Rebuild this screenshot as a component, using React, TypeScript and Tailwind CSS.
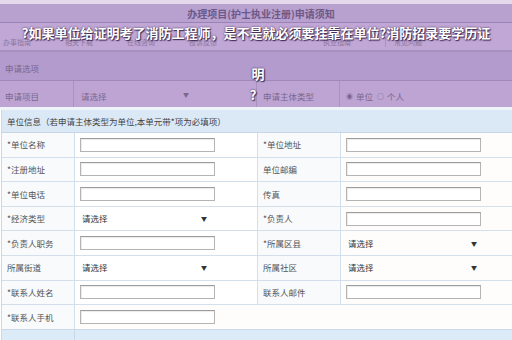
import React from "react";

const F = { fontFamily: '"Noto Sans CJK SC", "Noto Sans", sans-serif' };

function Input() {
  return <div className="ml-[5px] h-[14px] w-[135px] border border-[#b4b4b4] border-t-[#9c9c9c] bg-white shadow-[inset_1px_1px_1px_rgba(0,0,0,0.08)]" />;
}

function Select({ w = 125 }: { w?: number }) {
  return (
    <div className={`ml-[7px] flex items-center justify-between text-[8.5px] text-[#333] ${w === 125 ? "w-[125px]" : "w-[129px]"}`}>
      <span>请选择</span>
      <span className="text-[6px] text-[#333]">▼</span>
    </div>
  );
}

type Cell = "input" | "select";
const rows: [string, Cell, string, Cell][] = [
  ["*单位名称", "input", "*单位地址", "input"],
  ["*注册地址", "input", "单位邮编", "input"],
  ["*单位电话", "input", "传真", "input"],
  ["*经济类型", "select", "*负责人", "input"],
  ["*负责人职务", "input", "*所属区县", "select"],
  ["所属街道", "select", "所属社区", "select"],
  ["*联系人姓名", "input", "联系人邮件", "input"],
];

export default function App() {
  return (
    <div className="relative h-[340px] w-[512px] overflow-hidden bg-white" style={F}>
      {/* top (purple-tinted) area */}
      <div className="flex flex-col">
        <div className="h-[4px] bg-[#e4daec]" />
        <div className="flex h-[18px] items-center justify-center bg-[#b8a0cf] text-[10px] font-bold text-[#6d5987]">
          <span className="ml-[10px]">办理项目(护士执业注册)申请须知</span>
        </div>
        <div className="h-[1px] bg-[#9a83b6]" />
        <div className="flex h-[27px] items-end gap-[34px] bg-[#c0a7d5] pb-[3px] pl-[3px] text-[7px] text-[#8a76a0]">
          <span>办事指南</span>
          <span>相关下载</span>
          <span>在线咨询</span>
          <span>投诉反馈</span>
          <span className="ml-[72px]">执业指南</span>
          <span className="border-l border-[#a892c0] pl-[8px]">常见问题</span>
        </div>
        <div className="h-[2px] bg-[#a690c1]" />
        <div className="flex h-[28px] items-center bg-[#b39bcd] pl-[5px] pt-[5px] text-[8.5px] text-[#7a6790]">申请选项</div>
        <div className="h-[1px] bg-[#9f89ba]" />
        <div className="grid h-[26px] grid-cols-[74px_183px_83px_1fr] bg-[#bda4d3] text-[8.5px] text-[#7a6790]">
          <div className="flex items-center border-r border-[#a892c0] pl-[5px] pt-[4px]">申请项目</div>
          <div className="flex items-center border-r border-[#a892c0] pl-[7px] pt-[4px]">
            <div className="flex w-[108px] justify-between">
              <span>请选择</span>
              <span className="text-[6px]">▼</span>
            </div>
          </div>
          <div className="flex items-center border-r border-[#a892c0] pl-[6px] pt-[4px]">申请主体类型</div>
          <div className="flex items-center gap-[3px] pl-[6px] pt-[4px]">
            <span className="text-[7px]">◉</span>
            <span>单位</span>
            <span className="ml-[1px] text-[7px]">○</span>
            <span>个人</span>
          </div>
        </div>
        <div className="h-[3px] bg-[#eef4fa]" />
      </div>

      {/* 单位信息 */}
      <div className="ml-[1px] border-l border-[#c9d9e8]">
        <div className="flex h-[23px] items-center border-b border-[#c6d6e6] bg-[#dbe9f7] pl-[5px] text-[8.5px] text-[#444]">
          单位信息（若申请主体类型为单位,本单元带*项为必填项）
        </div>
        {rows.map((r, i) => (
          <div key={i} className="grid h-[24.6px] grid-cols-[73px_183px_83px_1fr] border-b border-[#d3dfea] text-[8.5px] text-[#555]">
            <div className="flex items-center border-r border-[#d3dfea] bg-[#f8fafc] pl-[5px]">{r[0]}</div>
            <div className="flex items-center border-r border-[#d3dfea] bg-white">
              {r[1] === "input" ? <Input /> : <Select />}
            </div>
            <div className="flex items-center border-r border-[#d3dfea] bg-[#f8fafc] pl-[5px]">{r[2]}</div>
            <div className="flex items-center bg-[#fffdfb]">
              {r[3] === "input" ? <Input /> : <Select w={129} />}
            </div>
          </div>
        ))}
        <div className="grid h-[24.6px] grid-cols-[73px_1fr] border-b border-[#c9d9e8] text-[8.5px] text-[#555]">
          <div className="flex items-center border-r border-[#d3dfea] bg-[#f8fafc] pl-[5px]">*联系人手机</div>
          <div className="flex items-center bg-[#fffdfb]">
            <Input />
          </div>
        </div>
        <div className="grid h-[12px] grid-cols-[73px_1fr] bg-[#dcebf8]">
          <div className="border-r border-[#c9d9e8]" />
          <div />
        </div>
      </div>

      {/* title overlay */}
      <div className="absolute left-0 top-0 w-[512px] text-center font-bold text-white [text-shadow:0_0_2px_rgba(40,20,60,0.9),1px_1px_1px_rgba(40,20,60,0.8)]">
        <div className="mt-[24px] text-[13px] leading-[18px]">?如果单位给证明考了消防工程师，是不是就必须要挂靠在单位?消防招录要学历证</div>
        <div className="mt-[23px] pl-[4px] text-[13px] leading-[18px]">明</div>
        <div className="mt-[3px] pr-[6px] text-[13px] leading-[18px]">?</div>
      </div>
    </div>
  );
}
